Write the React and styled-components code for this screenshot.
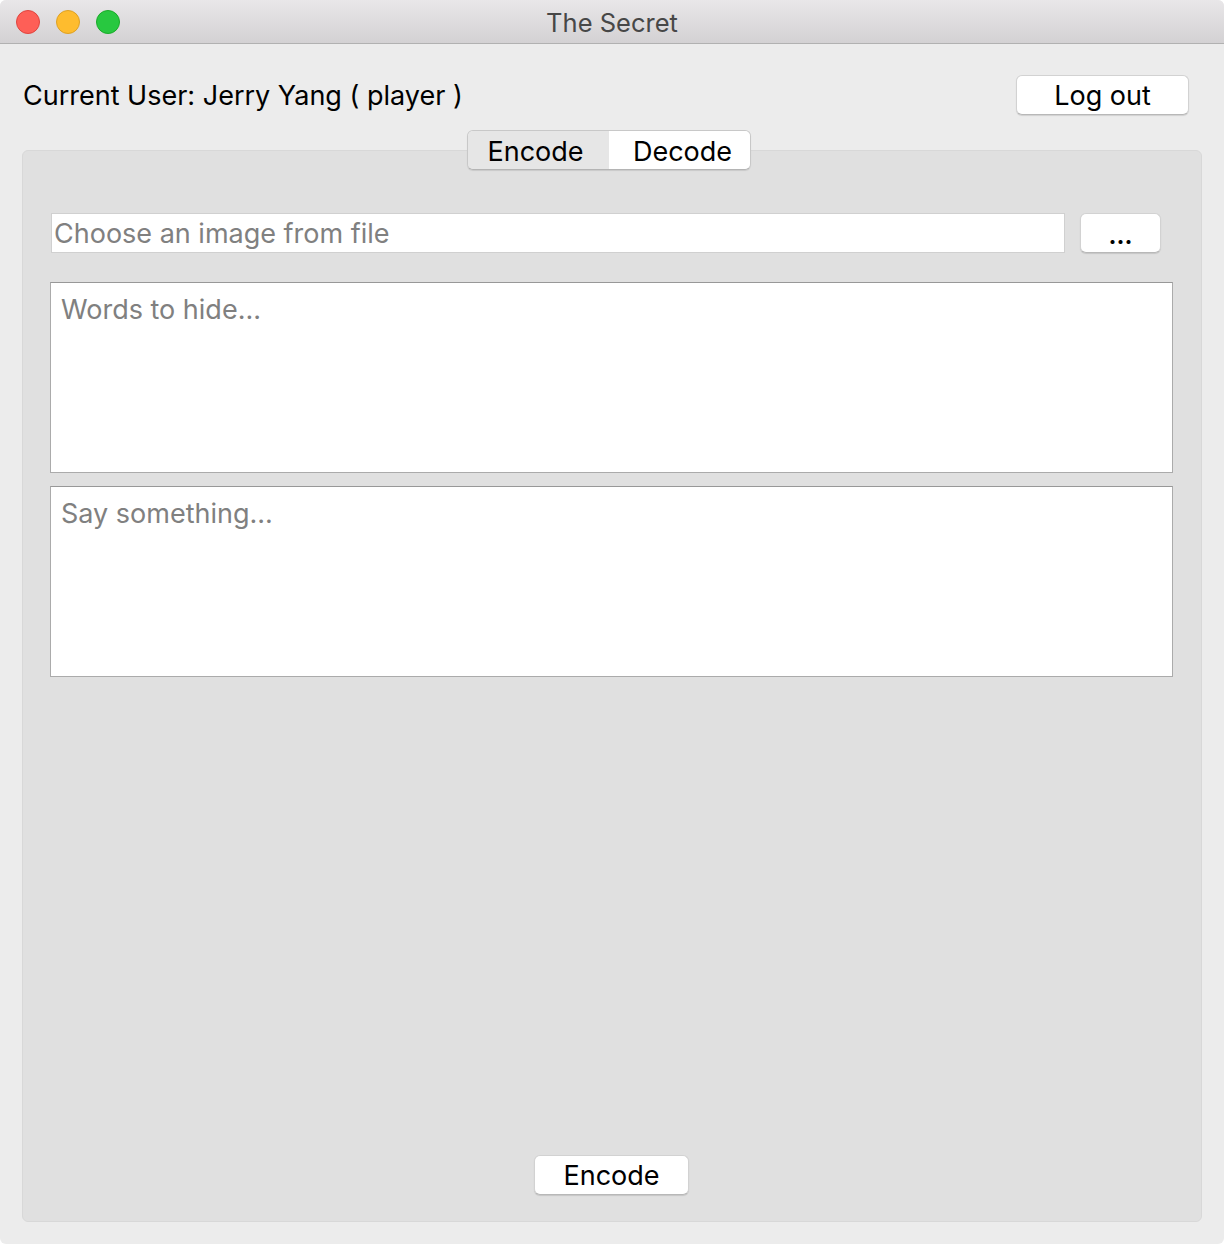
import styled, { createGlobalStyle } from "styled-components";

const GlobalStyle = createGlobalStyle`
  html, body {
    margin: 0;
    padding: 0;
    background: #ffffff;
  }
  * {
    box-sizing: border-box;
  }
`;

const lights = [
  { fill: "#fe5f57", edge: "#e0443e" },
  { fill: "#febc2e", edge: "#dea123" },
  { fill: "#28c840", edge: "#1aab29" },
];

const App = () => {
  return (
    <>
      <GlobalStyle />
      <StyledWindow>
        <StyledTitleBar>
          <StyledLights>
            {lights.map((l, i) => (
              <StyledLight key={i} $fill={l.fill} $edge={l.edge} />
            ))}
          </StyledLights>
          <StyledTitle>The Secret</StyledTitle>
        </StyledTitleBar>

        <StyledHeader>
          <StyledUser>Current User: Jerry Yang ( player )</StyledUser>
          <PushButton $width={173}>Log out</PushButton>
        </StyledHeader>

        <StyledTabWidget>
          <StyledTabBar>
            <StyledTab $selected $shift={-3}>
              Encode
            </StyledTab>
            <StyledTab $shift={3}>Decode</StyledTab>
          </StyledTabBar>
          <StyledPanel>
            <StyledFileRow>
              <StyledLineEdit placeholder="Choose an image from file" />
              <PushButton $width={81} $small>
                ...
              </PushButton>
            </StyledFileRow>
            <StyledTextEdit placeholder="Words to hide..." />
            <StyledTextEdit $gap={13} placeholder="Say something..." />
            <StyledFooter>
              <PushButton $width={155}>Encode</PushButton>
            </StyledFooter>
          </StyledPanel>
        </StyledTabWidget>
      </StyledWindow>
    </>
  );
};

const font = `"Inter", "Liberation Sans", "DejaVu Sans", sans-serif`;

const StyledWindow = styled.div`
  width: 1224px;
  height: 1244px;
  background-color: #ececec;
  border-radius: 6px;
  overflow: hidden;
  display: flex;
  flex-direction: column;
  font-family: ${font};
`;

const StyledTitleBar = styled.div`
  height: 44px;
  flex-shrink: 0;
  position: relative;
  display: flex;
  align-items: center;
  justify-content: center;
  background: linear-gradient(#e9e7e9, #d3d1d3);
  border-bottom: 1px solid #b1b1b1;
`;

const StyledLights = styled.div`
  position: absolute;
  left: 16px;
  top: 10px;
  display: flex;
  gap: 16px;
`;

const StyledLight = styled.span`
  width: 24px;
  height: 24px;
  border-radius: 50%;
  background-color: ${(p) => p.$fill};
  border: 1px solid ${(p) => p.$edge};
`;

const StyledTitle = styled.div`
  font-size: 25.5px;
  color: #474747;
  margin-top: 1px;
`;

const StyledHeader = styled.div`
  display: flex;
  align-items: center;
  justify-content: space-between;
  height: 40px;
  margin: 31px 35px 0 23px;
`;

const StyledUser = styled.div`
  font-size: 27px;
  color: #000;
`;

const PushButton = styled.button`
  width: ${(p) => p.$width}px;
  height: 40px;
  background-color: #fff;
  border: 1px solid #d2d2d2;
  border-bottom-color: #b8b8b8;
  border-radius: 6px;
  box-shadow: 0 1px 1px rgba(0, 0, 0, 0.12);
  font-family: ${font};
  font-size: ${(p) => (p.$small ? "24px" : "27px")};
  font-weight: ${(p) => (p.$small ? 700 : 400)};
  padding: ${(p) => (p.$small ? "4px 0 0" : "0")};
  color: #000;
  flex-shrink: 0;
  cursor: pointer;
`;

const StyledTabWidget = styled.div`
  flex: 1;
  display: flex;
  flex-direction: column;
  margin: 15px 22px 22px 22px;
`;

const StyledTabBar = styled.div`
  align-self: center;
  display: flex;
  margin: 0 0 -20px -6px;
  height: 40px;
  position: relative;
  z-index: 1;
  border: 1px solid #c8c8c8;
  border-bottom-color: #b4b4b4;
  border-radius: 6px;
  overflow: hidden;
  box-shadow: 0 1px 1px rgba(0, 0, 0, 0.1);
`;

const StyledTab = styled.div`
  width: 141px;
  display: flex;
  align-items: center;
  justify-content: center;
  padding: 3px 0 0 ${(p) => (p.$shift > 0 ? p.$shift * 2 : 0)}px;
  padding-right: ${(p) => (p.$shift < 0 ? -p.$shift * 2 : 0)}px;
  font-size: 27px;
  color: #000;
  background-color: ${(p) => (p.$selected ? "#e6e6e6" : "#ffffff")};
`;

const StyledPanel = styled.div`
  flex: 1;
  display: flex;
  flex-direction: column;
  background-color: #e0e0e0;
  border: 1px solid #d8d8d8;
  border-radius: 6px;
  padding: 62px 28px 26px 27px;
`;

const StyledFileRow = styled.div`
  display: flex;
  gap: 15px;
  margin: 0 12px 0 1px;
`;

const StyledLineEdit = styled.input`
  flex: 1;
  height: 40px;
  background-color: #fff;
  border: 1px solid #d0d0d0;
  padding: 0 2px;
  font-family: ${font};
  font-size: 27px;
  outline: none;
  &::placeholder {
    color: #808080;
  }
`;

const StyledTextEdit = styled.textarea`
  height: 191px;
  margin-top: ${(p) => p.$gap ?? 29}px;
  background-color: #fff;
  border: 1px solid #ababab;
  border-top-color: #989898;
  padding: 10px 10px;
  font-family: ${font};
  font-size: 27px;
  resize: none;
  outline: none;
  &::placeholder {
    color: #808080;
  }
`;

const StyledFooter = styled.div`
  margin-top: auto;
  display: flex;
  justify-content: center;
`;

export default App;
